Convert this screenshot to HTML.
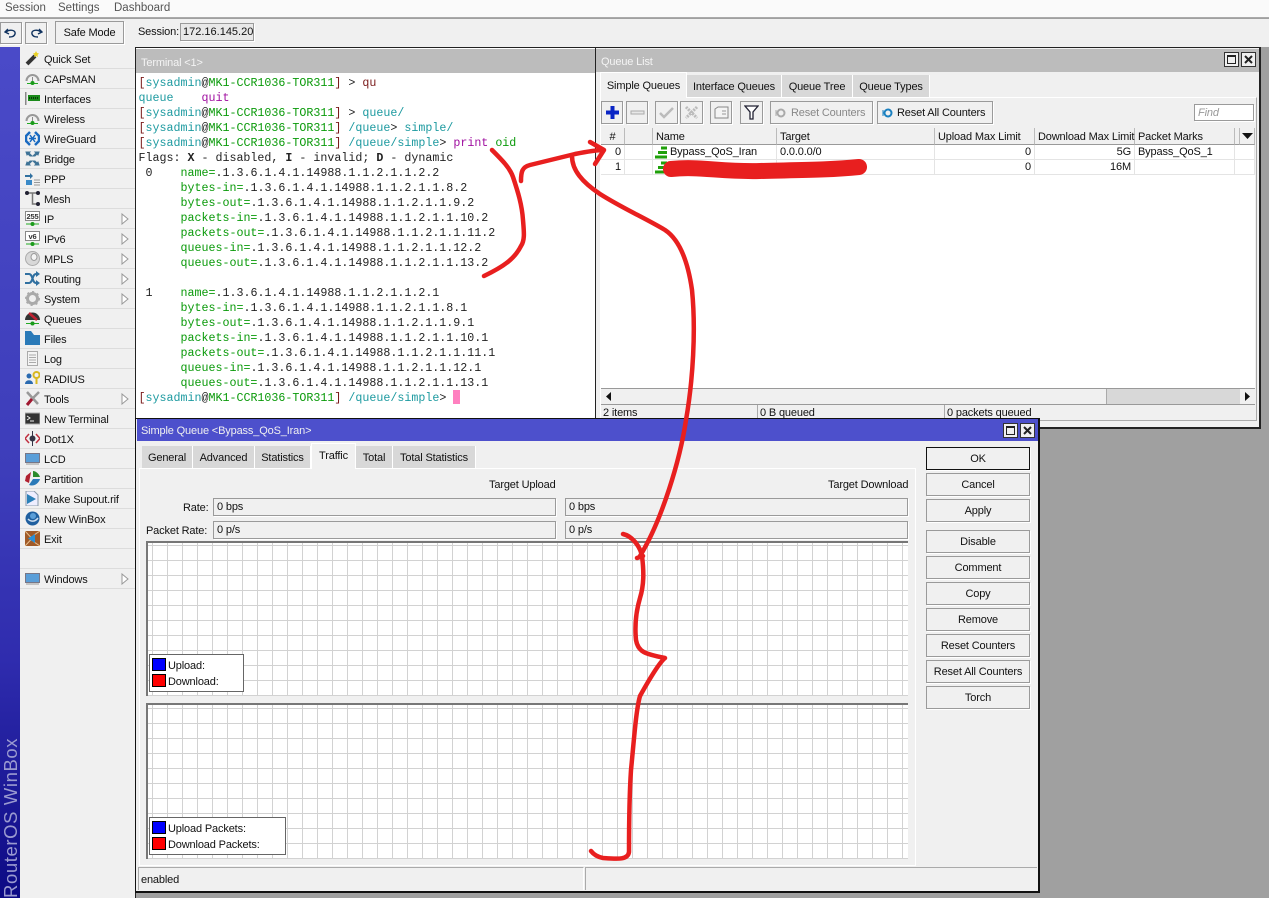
<!DOCTYPE html>
<html><head><meta charset="utf-8"><title>WinBox</title>
<style>
html,body{margin:0;padding:0}
body{width:1269px;height:898px;overflow:hidden;position:relative;background:#a0a0a0;font:11px/15px "Liberation Sans",sans-serif;letter-spacing:-.15px;color:#111}
div,span.a,svg.a{position:absolute;box-sizing:border-box;white-space:nowrap}
.btn{background:#f0f0f0;border:1px solid #9a9a9a;box-shadow:1px 1px 0 #fff;text-align:center}
.fld{background:#f0f0f0;border:1px solid #9a9a9a;box-shadow:1px 1px 0 #fff;padding-left:3px;line-height:17px}
.tab{background:#d8d8d8;border-right:1px solid #fff;text-align:center;top:0}
.tab.on{background:#f0f0f0;border:1px solid #fff;border-bottom:0}
.it{left:20px;width:115px;height:20px;border-bottom:1px solid #dcdcdc;line-height:22px;padding-left:24px}
.it svg{position:absolute;left:5px;top:2px;width:15px;height:15px}
.it svg.ar{left:101px;top:4px;width:8px;height:12px}
#term{font:11.67px/15px "Liberation Mono",monospace;letter-spacing:0;color:#222;white-space:pre}
.t{color:#1d9aa0}.g{color:#0a9a0a}.d{color:#7a1a1a}.m{color:#a010a0}
.hd{top:0;height:17px;border-right:1px solid #bbb;border-bottom:1px solid #999;background:#f0f0f0;padding-left:3px;line-height:19px}
.cell{height:15px;line-height:15px;border-right:1px solid #e4e4e4;border-bottom:1px solid #e4e4e4;padding:0 3px}
.r{text-align:right}
.graph{left:146px;width:762px;height:155px;background-color:#fff;border-top:2px solid #777;border-left:2px solid #777;background-image:linear-gradient(to right,#d2d2d2 1px,transparent 1px),linear-gradient(to bottom,#d2d2d2 1px,transparent 1px);background-size:15px 15px}
.leg{background:#fff;border:1px solid #666}
.sw{left:2px;width:14px;height:13px;border:1px solid #000}
.wb{top:52px;width:15px;height:15px;background:#f0f0f0;border:1px solid #333}
</style></head><body>

<!-- menu bar -->
<div style="left:0;top:0;width:1269px;height:18px;background:#fafafa;border-bottom:1px solid #aaa;color:#555;line-height:16px;font-size:11.5px;letter-spacing:0">
<span class="a" style="left:5px">Session</span><span class="a" style="left:58px">Settings</span><span class="a" style="left:114px">Dashboard</span></div>
<!-- toolbar -->
<div style="left:0;top:19px;width:1269px;height:28px;background:#f0f0f0"></div>
<div class="btn" style="left:0;top:22px;width:22px;height:22px"><svg class="a" style="left:3px;top:4px" width="14" height="12" viewBox="0 0 14 12"><path d="M4 2 L1 5 L5 7 M2 5 C6 2 12 3 11 7 C10 10 7 10 5 10" fill="none" stroke="#11335f" stroke-width="1.4"/></svg></div>
<div class="btn" style="left:25px;top:22px;width:22px;height:22px"><svg class="a" style="left:3px;top:4px" width="14" height="12" viewBox="0 0 14 12"><path d="M10 2 L13 5 L9 7 M12 5 C8 2 2 3 3 7 C4 10 7 10 9 10" fill="none" stroke="#11335f" stroke-width="1.4"/></svg></div>
<div class="btn" style="left:55px;top:21px;width:69px;height:23px;line-height:23px">Safe Mode</div>
<span class="a" style="left:138px;top:25px">Session:</span>
<div class="fld" style="left:180px;top:23px;width:74px;height:18px;padding-left:2px;background:#e8e8e8;letter-spacing:0;line-height:16px">172.16.145.20</div>

<!-- sidebar -->
<div style="left:0;top:47px;width:20px;height:851px;background:linear-gradient(to bottom,#4a4ac8 0%,#3d3dba 50%,#2f2cae 72%,#0c0a84 100%)"></div>
<div style="left:20px;top:47px;width:115px;height:851px;background:#f0f0f0"></div>
<div style="left:135px;top:47px;width:1px;height:851px;background:#222"></div>
<div style="left:2px;top:738px;height:160px;width:18px;writing-mode:vertical-rl;transform:rotate(180deg);font:18.5px/18px 'Liberation Sans',sans-serif;color:#9a9ad0;letter-spacing:.6px;text-align:left">RouterOS WinBox</div>

<div class="it" style="top:49px"><svg viewBox="0 0 15 15"><path d="M2 13 L10 5" stroke="#333" stroke-width="4"/><path d="M11 0 l1 2 2 .5 -1.500 1.500 .5 2 -2 -1 -2 1 .5-2 -1.500-1.500 2-.5z" fill="#e8d020"/></svg>Quick Set</div>
<div class="it" style="top:69px"><svg viewBox="0 0 15 15"><path d="M1.500 10 A6 6 0 0 1 13.500 10" fill="none" stroke="#999" stroke-width="2"/><path d="M7.500 6V12" stroke="#888"/><path d="M2 12.500H13" stroke="#2a2" stroke-width="1"/><circle cx="7.500" cy="12" r="2" fill="#1a9a1a"/></svg>CAPsMAN</div>
<div class="it" style="top:89px"><svg viewBox="0 0 15 15"><rect x="0" y="1" width="1.500" height="13" fill="#888"/><rect x="3" y="4" width="12" height="6" fill="#1a8a1a"/><path d="M4 7h10" stroke="#0a3a0a" stroke-dasharray="1 1" stroke-width="2"/></svg>Interfaces</div>
<div class="it" style="top:109px"><svg viewBox="0 0 15 15"><path d="M1.500 10 A6 6 0 0 1 13.500 10" fill="none" stroke="#999" stroke-width="2"/><path d="M7.500 6V12" stroke="#888"/><path d="M2 12.500H13" stroke="#2a2"/><circle cx="7.500" cy="12" r="2" fill="#1a9a1a"/></svg>Wireless</div>
<div class="it" style="top:129px"><svg viewBox="0 0 15 15"><path d="M5 1 L1 5 V10 L5 14 M10 1 L14 5 V10 L10 14" fill="none" stroke="#1a6ac0" stroke-width="2.500"/><path d="M4 7.500H11 M5 4L10 11 M10 4L5 11" stroke="#1a6ac0" stroke-width="1.500"/></svg>WireGuard</div>
<div class="it" style="top:149px"><svg viewBox="0 0 15 15"><path d="M1 1h4l-1 1 3 3-2 0-2-2-1 1z M14 1h-4l1 1-3 3 2 0 2-2 1 1z M1 14h4l-1-1 3-3-2 0-2 2-1-1z M14 14h-4l1-1-3-3 2 0 2 2 1-1z" fill="#3f7396" stroke="#3f7396"/></svg>Bridge</div>
<div class="it" style="top:169px"><svg viewBox="0 0 15 15"><path d="M0 5H6" stroke="#3070a0" stroke-width="2"/><path d="M5 2l3 3-3 3z" fill="#3070a0"/><rect x="1" y="9" width="6" height="5" fill="#3a8ac8"/><path d="M9 9h6M9 11.500h6M9 14h6" stroke="#999"/></svg>PPP</div>
<div class="it" style="top:189px"><svg viewBox="0 0 15 15"><path d="M2 2H13 M7.500 2V13H13" fill="none" stroke="#777" stroke-width="1.500"/><circle cx="2" cy="2" r="2" fill="#223"/><circle cx="13" cy="2" r="2" fill="#223"/><circle cx="13" cy="13" r="2" fill="#223"/></svg>Mesh</div>
<div class="it" style="top:209px"><svg viewBox="0 0 15 15"><rect x=".5" y=".5" width="14" height="9" fill="#fff" stroke="#888"/><text x="7.500" y="8" font-family="Liberation Sans" font-size="7.500" font-weight="bold" text-anchor="middle" fill="#333">255</text><path d="M1 13H14" stroke="#2a2"/><circle cx="7.500" cy="13" r="2" fill="#1a9a1a"/></svg>IP<svg class="ar" viewBox="0 0 8 12"><path d="M1 1L7 6 1 11z" fill="#fff" stroke="#999"/></svg></div>
<div class="it" style="top:229px"><svg viewBox="0 0 15 15"><rect x=".5" y=".5" width="14" height="9" fill="#fff" stroke="#888"/><text x="7.500" y="8" font-family="Liberation Sans" font-size="7.500" font-weight="bold" text-anchor="middle" fill="#333">v6</text><path d="M1 13H14" stroke="#2a2"/><circle cx="7.500" cy="13" r="2" fill="#1a9a1a"/></svg>IPv6<svg class="ar" viewBox="0 0 8 12"><path d="M1 1L7 6 1 11z" fill="#fff" stroke="#999"/></svg></div>
<div class="it" style="top:249px"><svg viewBox="0 0 15 15"><circle cx="7.500" cy="7.500" r="7" fill="#d8d8d8" stroke="#aaa"/><ellipse cx="9" cy="6" rx="3" ry="3.500" fill="#f4f4f4" stroke="#999"/></svg>MPLS<svg class="ar" viewBox="0 0 8 12"><path d="M1 1L7 6 1 11z" fill="#fff" stroke="#999"/></svg></div>
<div class="it" style="top:269px"><svg viewBox="0 0 15 15"><path d="M0 3H4C8 3 7 12 11 12H13 M0 12H4C8 12 7 3 11 3H13" fill="none" stroke="#3070a0" stroke-width="2"/><path d="M11 0l4 3-4 3z M11 9l4 3-4 3z" fill="#3070a0"/></svg>Routing<svg class="ar" viewBox="0 0 8 12"><path d="M1 1L7 6 1 11z" fill="#fff" stroke="#999"/></svg></div>
<div class="it" style="top:289px"><svg viewBox="0 0 15 15"><circle cx="7.500" cy="7.500" r="5" fill="none" stroke="#aaa" stroke-width="3"/><circle cx="7.500" cy="7.500" r="6.500" fill="none" stroke="#aaa" stroke-width="2" stroke-dasharray="2 3"/></svg>System<svg class="ar" viewBox="0 0 8 12"><path d="M1 1L7 6 1 11z" fill="#fff" stroke="#999"/></svg></div>
<div class="it" style="top:309px"><svg viewBox="0 0 15 15"><path d="M0 9A7.500 7.500 0 0 1 15 9z" fill="#333"/><path d="M4 2L12 9" stroke="#c02030" stroke-width="2.500"/><path d="M1 12.500H14" stroke="#2a2"/><circle cx="7.500" cy="12.500" r="2" fill="#1a9a1a"/></svg>Queues</div>
<div class="it" style="top:329px"><svg viewBox="0 0 15 15"><path d="M0 0H6L9 4H15V14H0z" fill="#2a7ab8"/></svg>Files</div>
<div class="it" style="top:349px"><svg viewBox="0 0 15 15"><rect x="2.500" y=".5" width="10" height="14" fill="#f4f4f4" stroke="#aaa"/><path d="M4 4h7M4 6.500h7M4 9h7M4 11.500h7" stroke="#aaa"/></svg>Log</div>
<div class="it" style="top:369px"><svg viewBox="0 0 15 15"><circle cx="4" cy="5" r="2.500" fill="#2a6ab0"/><path d="M0 13C0 8 8 8 8 13z" fill="#2a6ab0"/><circle cx="11.500" cy="4" r="3" fill="none" stroke="#d8b820" stroke-width="2"/><path d="M11.500 7V13" stroke="#d8b820" stroke-width="2"/></svg>RADIUS</div>
<div class="it" style="top:389px"><svg viewBox="0 0 15 15"><path d="M2 1L13 13" stroke="#999" stroke-width="2.500"/><path d="M14 1L7 8" stroke="#999" stroke-width="2.500"/><path d="M7 8L2 14" stroke="#a01830" stroke-width="3"/></svg>Tools<svg class="ar" viewBox="0 0 8 12"><path d="M1 1L7 6 1 11z" fill="#fff" stroke="#999"/></svg></div>
<div class="it" style="top:409px"><svg viewBox="0 0 15 15"><rect x="0" y="2" width="15" height="11" fill="#333" stroke="#aaa"/><path d="M2 5l3 2-3 2M5 10h4" fill="none" stroke="#eee"/></svg>New Terminal</div>
<div class="it" style="top:429px"><svg viewBox="0 0 15 15"><path d="M4 3L0 7.500 4 12 M11 3L15 7.500 11 12" fill="none" stroke="#c03040" stroke-width="1.500"/><circle cx="7.500" cy="7.500" r="3" fill="#334"/><path d="M7.500 0V15" stroke="#334"/></svg>Dot1X</div>
<div class="it" style="top:449px"><svg viewBox="0 0 15 15"><rect x=".5" y="2.500" width="14" height="9" fill="#5a9ed8" stroke="#778"/><path d="M1 13H14" stroke="#999"/></svg>LCD</div>
<div class="it" style="top:469px"><svg viewBox="0 0 15 15"><path d="M6 1L1 5 0 10 4 12z" fill="#b02030"/><path d="M8 0V6H15C14 3 11 0 8 0z" fill="#2a8a2a"/><path d="M4 14L8 8H15C14 12 9 16 4 14z" fill="#2a7ab8"/></svg>Partition</div>
<div class="it" style="top:489px"><svg viewBox="0 0 15 15"><path d="M1 0H9L13 4V15H1z" fill="#eef" stroke="#89a"/><path d="M2 3L11 8 2 13z" fill="#2a80b8"/></svg>Make Supout.rif</div>
<div class="it" style="top:509px"><svg viewBox="0 0 15 15"><circle cx="7.500" cy="7.500" r="7" fill="#1f5f9f"/><path d="M3 8C6 11 10 11 13 7" fill="none" stroke="#cde" stroke-width="1.500"/><circle cx="8" cy="5" r="3" fill="#5a9ed8"/></svg>New WinBox</div>
<div class="it" style="top:529px"><svg viewBox="0 0 15 15"><rect width="15" height="15" fill="#a05a28"/><path d="M0 0L7 7.500 0 15M15 0L9 4V11L15 15" fill="none" stroke="#e8c090"/><path d="M3 7.500L10 3V12z" fill="#2a90d8"/></svg>Exit</div>
<div class="it" style="top:549px"></div>
<div class="it" style="top:569px"><svg viewBox="0 0 15 15"><rect x=".5" y="2.500" width="14" height="9" fill="#5a9ed8" stroke="#778"/><path d="M1 13H14" stroke="#999"/></svg>Windows<svg class="ar" viewBox="0 0 8 12"><path d="M1 1L7 6 1 11z" fill="#fff" stroke="#999"/></svg></div>

<!-- terminal window -->
<div style="left:135px;top:47px;width:462px;height:373px;background:#fff;border:1px solid #222;border-left-width:1px">
<div style="left:0;top:1px;width:460px;height:24px;background:#bcbcbc;color:#f4f4f4;line-height:29px;padding-left:5px">Terminal &lt;1&gt;</div>
<div id="term" style="left:2.500px;top:28px"><span class="d">[</span><span class="t">sysadmin</span>@<span class="g">MK1-CCR1036-TOR311</span><span class="d">]</span> &gt; <span class="d">qu</span>
<span class="t">queue</span>    <span class="m">quit</span>
<span class="d">[</span><span class="t">sysadmin</span>@<span class="g">MK1-CCR1036-TOR311</span><span class="d">]</span> &gt; <span class="t">queue/</span>
<span class="d">[</span><span class="t">sysadmin</span>@<span class="g">MK1-CCR1036-TOR311</span><span class="d">]</span> <span class="t">/queue</span>&gt; <span class="t">simple/</span>
<span class="d">[</span><span class="t">sysadmin</span>@<span class="g">MK1-CCR1036-TOR311</span><span class="d">]</span> <span class="t">/queue/simple</span>&gt; <span class="m">print</span> <span class="g">oid</span>
Flags: <b>X</b> - disabled, <b>I</b> - invalid; <b>D</b> - dynamic
 0    <span class="g">name=</span>.1.3.6.1.4.1.14988.1.1.2.1.1.2.2
      <span class="g">bytes-in=</span>.1.3.6.1.4.1.14988.1.1.2.1.1.8.2
      <span class="g">bytes-out=</span>.1.3.6.1.4.1.14988.1.1.2.1.1.9.2
      <span class="g">packets-in=</span>.1.3.6.1.4.1.14988.1.1.2.1.1.10.2
      <span class="g">packets-out=</span>.1.3.6.1.4.1.14988.1.1.2.1.1.11.2
      <span class="g">queues-in=</span>.1.3.6.1.4.1.14988.1.1.2.1.1.12.2
      <span class="g">queues-out=</span>.1.3.6.1.4.1.14988.1.1.2.1.1.13.2

 1    <span class="g">name=</span>.1.3.6.1.4.1.14988.1.1.2.1.1.2.1
      <span class="g">bytes-in=</span>.1.3.6.1.4.1.14988.1.1.2.1.1.8.1
      <span class="g">bytes-out=</span>.1.3.6.1.4.1.14988.1.1.2.1.1.9.1
      <span class="g">packets-in=</span>.1.3.6.1.4.1.14988.1.1.2.1.1.10.1
      <span class="g">packets-out=</span>.1.3.6.1.4.1.14988.1.1.2.1.1.11.1
      <span class="g">queues-in=</span>.1.3.6.1.4.1.14988.1.1.2.1.1.12.1
      <span class="g">queues-out=</span>.1.3.6.1.4.1.14988.1.1.2.1.1.13.1
<span class="d">[</span><span class="t">sysadmin</span>@<span class="g">MK1-CCR1036-TOR311</span><span class="d">]</span> <span class="t">/queue/simple</span>&gt; </div>
<div style="left:317px;top:342px;width:7px;height:14px;background:#ff80c0"></div>
</div>

<!-- queue list window -->
<div style="left:595px;top:47px;width:666px;height:382px;background:#f0f0f0;border:2px solid #222;border-width:1px 2px 2px 1px">
<div style="left:0;top:1px;width:663px;height:23px;background:#bcbcbc;color:#f4f4f4;line-height:26px;padding-left:5px">Queue List</div>
<div style="left:4px;top:49px;width:657px;height:324px;border:1px solid #fff;border-right:1px solid #aaa;border-bottom:1px solid #aaa"></div>
</div>
<div class="wb" style="left:1224px"><div style="left:2px;top:2px;width:9px;height:9px;border:1px solid #222;border-top-width:2px"></div></div>
<div class="wb" style="left:1241px"><svg class="a" style="left:2px;top:2px" width="9" height="9"><path d="M1 1L8 8M8 1L1 8" stroke="#222" stroke-width="2"/></svg></div>

<!-- queue tabs -->
<div style="left:600px;top:72px;width:340px;height:26px">
<div class="tab on" style="left:0;width:87px;height:26px;line-height:26px;z-index:1">Simple Queues</div>
<div class="tab" style="left:87px;top:3px;width:95px;height:22px;line-height:24px">Interface Queues</div>
<div class="tab" style="left:182px;top:3px;width:71px;height:22px;line-height:24px">Queue Tree</div>
<div class="tab" style="left:253px;top:3px;width:77px;height:22px;line-height:24px">Queue Types</div>
</div>
<!-- queue toolbar -->
<div class="btn" style="left:601px;top:101px;width:22px;height:23px"><svg class="a" style="left:3px;top:3px" width="15" height="15"><path d="M7.500 1V14M1 7.500H14" stroke="#0a2ad8" stroke-width="4"/><path d="M7.500 1V14M1 7.500H14" stroke="#0a1a90" stroke-width="4" opacity=".25"/></svg></div>
<div class="btn" style="left:626px;top:101px;width:22px;height:23px"><svg class="a" style="left:3px;top:3px" width="15" height="15"><rect x="1" y="6" width="13" height="3" fill="#e8e8e8" stroke="#aaa"/></svg></div>
<div class="btn" style="left:655px;top:101px;width:23px;height:23px"><svg class="a" style="left:3px;top:3px" width="15" height="15"><path d="M1 8L5 12 14 3" fill="none" stroke="#bbb" stroke-width="2.500"/></svg></div>
<div class="btn" style="left:680px;top:101px;width:23px;height:23px"><svg class="a" style="left:3px;top:3px" width="15" height="15"><path d="M2 2L13 13M13 2L2 13" fill="none" stroke="#bbb" stroke-width="3" stroke-dasharray="2 1"/></svg></div>
<div class="btn" style="left:710px;top:101px;width:22px;height:23px"><svg class="a" style="left:3px;top:4px" width="15" height="13"><path d="M1 3L4 1H14V12H1z" fill="#f4f4f4" stroke="#888"/><path d="M8 5h4M8 8h4" stroke="#999"/></svg></div>
<div class="btn" style="left:740px;top:101px;width:23px;height:23px"><svg class="a" style="left:3px;top:3px" width="15" height="15"><path d="M1 1H14L9 7V14H6V7z" fill="#fff" stroke="#223" stroke-width="1.300"/></svg></div>
<div class="btn" style="left:770px;top:101px;width:103px;height:23px;line-height:23px;color:#888;padding-left:20px;text-align:left"><svg class="a" style="left:4px;top:6px" width="12" height="10"><circle cx="6" cy="5" r="3.500" fill="none" stroke="#aaa" stroke-width="2"/><path d="M1 2V8" stroke="#aaa"/></svg>Reset Counters</div>
<div class="btn" style="left:877px;top:101px;width:116px;height:23px;line-height:23px;padding-left:19px;text-align:left"><svg class="a" style="left:4px;top:6px" width="12" height="10"><circle cx="6" cy="5" r="3.500" fill="none" stroke="#1a80c0" stroke-width="2"/><path d="M1 2V8" stroke="#1a80c0"/></svg>Reset All Counters</div>
<div class="fld" style="left:1194px;top:104px;width:60px;height:17px;background:#fff;color:#999;font-style:italic;line-height:16px">Find</div>

<!-- queue table -->
<div style="left:601px;top:128px;width:654px;height:260px;background:#fff">
<div class="hd" style="left:0;width:24px;text-align:center;padding:0">#</div>
<div class="hd" style="left:24px;width:28px"></div>
<div class="hd" style="left:52px;width:124px">Name</div>
<div class="hd" style="left:176px;width:158px">Target</div>
<div class="hd" style="left:334px;width:100px">Upload Max Limit</div>
<div class="hd" style="left:434px;width:100px">Download Max Limit</div>
<div class="hd" style="left:534px;width:100px">Packet Marks</div>
<div class="hd" style="left:634px;width:5px"></div>
<div class="hd" style="left:639px;width:15px"><svg class="a" style="left:2px;top:5px" width="11" height="6"><path d="M0 0H11L5.500 6z" fill="#111"/></svg></div>
<div class="cell r" style="left:0;top:17px;width:24px">0</div><div class="cell" style="left:24px;top:17px;width:28px"></div>
<div class="cell" style="left:52px;top:17px;width:124px;padding-left:17px">Bypass_QoS_Iran</div>
<div class="cell" style="left:176px;top:17px;width:158px">0.0.0.0/0</div>
<div class="cell r" style="left:334px;top:17px;width:100px">0</div>
<div class="cell r" style="left:434px;top:17px;width:100px">5G</div>
<div class="cell" style="left:534px;top:17px;width:100px">Bypass_QoS_1</div>
<div class="cell" style="left:634px;top:17px;width:20px"></div>
<div class="cell r" style="left:0;top:32px;width:24px">1</div><div class="cell" style="left:24px;top:32px;width:28px"></div>
<div class="cell" style="left:52px;top:32px;width:124px"></div>
<div class="cell" style="left:176px;top:32px;width:158px"></div>
<div class="cell r" style="left:334px;top:32px;width:100px">0</div>
<div class="cell r" style="left:434px;top:32px;width:100px">16M</div>
<div class="cell" style="left:534px;top:32px;width:100px"></div>
<div class="cell" style="left:634px;top:32px;width:20px"></div>
<svg class="a" style="left:53px;top:18px" width="14" height="13"><path d="M7 2h6M4 6.500h9M1 11h12" stroke="#1fa00a" stroke-width="3"/></svg>
<svg class="a" style="left:53px;top:33px" width="14" height="13"><path d="M7 2h6M4 6.500h9M1 11h12" stroke="#1fa00a" stroke-width="3"/></svg>
</div>
<!-- scrollbar -->
<div style="left:601px;top:388px;width:654px;height:17px;background:#d8d8d8;border-top:1px solid #999;border-bottom:1px solid #999">
<div style="left:0;top:0;width:506px;height:15px;background:#f0f0f0;border-right:1px solid #aaa"></div>
<div style="left:639px;top:0;width:15px;height:15px;background:#f0f0f0"></div>
<svg class="a" style="left:4px;top:3px" width="7" height="9"><path d="M6 0V9L1 4.500z" fill="#111"/></svg>
<svg class="a" style="left:643px;top:3px" width="7" height="9"><path d="M1 0V9L6 4.500z" fill="#111"/></svg>
</div>
<div style="left:757px;top:405px;width:1px;height:14px;background:#aaa"></div>
<div style="left:944px;top:405px;width:1px;height:14px;background:#aaa"></div>
<span class="a" style="left:603px;top:406px">2 items</span>
<span class="a" style="left:760px;top:406px">0 B queued</span>
<span class="a" style="left:947px;top:406px">0 packets queued</span>

<!-- simple queue window -->
<div style="left:135px;top:418px;width:905px;height:475px;background:#f0f0f0;border:1px solid #111;border-width:1px 2px 2px 1px"></div>
<div style="left:137px;top:419px;width:901px;height:22px;background:#4d50cc;color:#f0f0f0;line-height:25px;padding-left:4px">Simple Queue &lt;Bypass_QoS_Iran&gt;</div>
<div class="wb" style="left:1003px;top:423px"><div style="left:2px;top:2px;width:9px;height:9px;border:1px solid #222;border-top-width:2px"></div></div>
<div class="wb" style="left:1020px;top:423px"><svg class="a" style="left:2px;top:2px" width="9" height="9"><path d="M1 1L8 8M8 1L1 8" stroke="#222" stroke-width="2"/></svg></div>
<!-- panel -->
<div style="left:139px;top:468px;width:777px;height:398px;border:1px solid #fff"></div>
<div class="tab" style="left:142px;top:446px;width:51px;height:22px;line-height:24px">General</div>
<div class="tab" style="left:193px;top:446px;width:62px;height:22px;line-height:24px">Advanced</div>
<div class="tab" style="left:255px;top:446px;width:56px;height:22px;line-height:24px">Statistics</div>
<div class="tab on" style="left:311px;top:443px;width:45px;height:26px;line-height:24px">Traffic</div>
<div class="tab" style="left:356px;top:446px;width:37px;height:22px;line-height:24px">Total</div>
<div class="tab" style="left:393px;top:446px;width:83px;height:22px;line-height:24px">Total Statistics</div>

<span class="a" style="left:489px;top:478px">Target Upload</span>
<span class="a" style="left:828px;top:478px">Target Download</span>
<span class="a" style="left:183px;top:501px">Rate:</span>
<span class="a" style="left:146px;top:524px">Packet Rate:</span>
<div class="fld" style="left:213px;top:498px;width:343px;height:18px">0 bps</div>
<div class="fld" style="left:565px;top:498px;width:343px;height:18px">0 bps</div>
<div class="fld" style="left:213px;top:521px;width:343px;height:18px">0 p/s</div>
<div class="fld" style="left:565px;top:521px;width:343px;height:18px">0 p/s</div>

<div class="graph" style="top:541px;background-position:4px 2px"></div>
<div class="graph" style="top:703px;height:156px;background-position:4px 3px"></div>
<div class="leg" style="left:149px;top:654px;width:95px;height:38px"><div class="sw" style="top:3px;background:#00f"></div><div class="sw" style="top:19px;background:#f00"></div><span class="a" style="left:18px;top:4px">Upload:</span><span class="a" style="left:18px;top:20px">Download:</span></div>
<div class="leg" style="left:149px;top:817px;width:137px;height:38px"><div class="sw" style="top:3px;background:#00f"></div><div class="sw" style="top:19px;background:#f00"></div><span class="a" style="left:18px;top:4px">Upload Packets:</span><span class="a" style="left:18px;top:20px">Download Packets:</span></div>

<div style="left:138px;top:867px;width:446px;height:23px;border:1px solid #aaa;border-right-color:#fff;border-bottom:0;line-height:24px;padding-left:2px">enabled</div>
<div style="left:585px;top:867px;width:452px;height:23px;border:1px solid #aaa;border-bottom:0;border-right:0"></div>

<div class="btn" style="left:926px;top:447px;width:104px;height:23px;line-height:22px;border-color:#111">OK</div>
<div class="btn" style="left:926px;top:473px;width:104px;height:23px;line-height:22px">Cancel</div>
<div class="btn" style="left:926px;top:499px;width:104px;height:23px;line-height:22px">Apply</div>
<div class="btn" style="left:926px;top:530px;width:104px;height:23px;line-height:22px">Disable</div>
<div class="btn" style="left:926px;top:556px;width:104px;height:23px;line-height:22px">Comment</div>
<div class="btn" style="left:926px;top:582px;width:104px;height:23px;line-height:22px">Copy</div>
<div class="btn" style="left:926px;top:608px;width:104px;height:23px;line-height:22px">Remove</div>
<div class="btn" style="left:926px;top:634px;width:104px;height:23px;line-height:22px">Reset Counters</div>
<div class="btn" style="left:926px;top:660px;width:104px;height:23px;line-height:22px">Reset All Counters</div>
<div class="btn" style="left:926px;top:686px;width:104px;height:23px;line-height:22px">Torch</div>

<!-- red annotations -->
<svg class="a" style="left:0;top:0" width="1269" height="898" fill="none" stroke="#e81f1f" stroke-linecap="round" stroke-linejoin="round">
<path stroke-width="4.500" d="M492 150 C502 160 510 168 513 177 C518 192 522 205 523 220 C524 232 525 240 521 246 C515 258 505 266 484 276"/>
<path stroke-width="4.500" d="M521 181 C521 172 522 167 530 165 L575 154 C585 152 595 150 604 150 M590 142 L604 150 L595 164"/>
<path stroke-width="4.500" d="M572 156 C572 170 582 182 600 194 C622 208 645 218 665 230 C680 240 688 262 692 290 C696 330 693 380 686 420 C680 460 662 520 640 556"/>
<path stroke-width="4.500" d="M623 534 C632 536 640 546 642 556 C644 572 644 585 640 598 C635 615 635 630 636 640 C638 652 645 654 665 658 C660 662 650 678 640 696 C636 710 634 740 631 770 C629 800 629 830 629 852 C628 860 618 859 603 858 C598 857 594 855 591 851"/>
<path stroke-width="4.500" d="M637 558 L643 556"/>
<path stroke-width="16" d="M671 169 C700 166 720 172 760 171 C800 170 830 170 859 167"/>
</svg>
</body></html>
